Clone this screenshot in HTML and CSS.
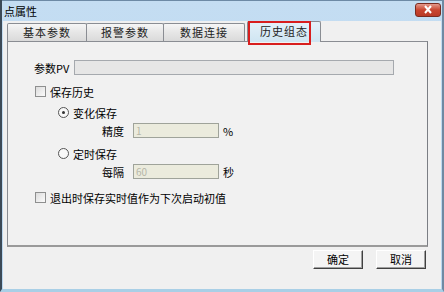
FILE: index.html
```html
<!DOCTYPE html>
<html lang="zh-CN">
<head>
  <meta charset="UTF-8">
  <title>点属性</title>
  <link rel="stylesheet" href="styles.css">
</head>
<body>
  <div class="window">
    <div class="titlebar">
      <span class="title">点属性</span>
      <span class="close">
        <svg width="14" height="9" viewBox="0 0 14 9">
          <path d="M4 1 L10 8 M10 1 L4 8" stroke="#fff" stroke-width="2" fill="none"/>
        </svg>
      </span>
    </div>
    <div class="client">
      <div class="tabs">
        <div class="tab t1">基本参数</div>
        <div class="tab t2">报警参数</div>
        <div class="tab t3">数据连接</div>
        <div class="tab active">历史组态<span class="mark"></span></div>
      </div>
      <div class="panel">
        <div class="row pv">
          <span class="label">参数PV</span>
          <span class="field wide"></span>
        </div>
        <div class="row check first">
          <span class="box"></span><span>保存历史</span>
        </div>
        <div class="row radio">
          <span class="dot on"></span><span>变化保存</span>
        </div>
        <div class="row sub">
          <span class="label">精度</span>
          <span class="field off">1</span>
          <span class="unit">%</span>
        </div>
        <div class="row radio">
          <span class="dot"></span><span>定时保存</span>
        </div>
        <div class="row sub">
          <span class="label">每隔</span>
          <span class="field off">60</span>
          <span class="unit">秒</span>
        </div>
        <div class="row check last">
          <span class="box"></span><span>退出时保存实时值作为下次启动初值</span>
        </div>
      </div>
      <div class="buttons">
        <button class="btn">确定</button>
        <button class="btn">取消</button>
      </div>
    </div>
  </div>
</body>
</html>
```

FILE: styles.css
```css
* {
  box-sizing: border-box;
}
body {
  margin: 0;
  width: 444px;
  height: 292px;
  overflow: hidden;
  font-family: "Noto Sans CJK SC", sans-serif;
  font-size: 11px;
  color: #000;
  background-color: #9fc3e0;
}
.window {
  width: 444px;
  height: 292px;
  border-left: 2px solid #3c4a57;
  border-right: 2px solid #6f8aa3;
  border-bottom: 3px solid #a9cfe6;
  background: linear-gradient(#c4ddf2, #b9d6ef);
}
.titlebar {
  height: 21px;
  display: flex;
  align-items: center;
  justify-content: space-between;
  padding: 0 1px 0 2px;
  border-top: 1px solid #6d8aa5;
}
.title {
  font-size: 11px;
  line-height: 14px;
}
.close {
  width: 26px;
  height: 14px;
  margin-top: -3px;
  border: 1px solid #7a2b20;
  border-radius: 3px;
  background: linear-gradient(#e49a8c, #c9452f 50%, #b93a26);
  display: flex;
  align-items: center;
  justify-content: center;
}
.client {
  height: 268px;
  margin-left: 1px;
  margin-right: 1px;
  background-color: #f0f0f0;
  padding: 1px 0 0 4px;
}
.tabs {
  display: flex;
  align-items: flex-end;
  height: 19px;
}
.tab {
  height: 18px;
  line-height: 16px;
  text-align: center;
  letter-spacing: 1px;
  color: #222;
  border: 1px solid #8a8d93;
  border-bottom: none;
  border-radius: 2px 2px 0 0;
  background: linear-gradient(#f6f6f6, #e6e6e6 50%, #dadada);
  margin-right: -1px;
}
.t1 {
  width: 80px;
}
.t2 {
  width: 78px;
}
.t3 {
  width: 82px;
}
.tab.active {
  position: relative;
  width: 74px;
  height: 21px;
  margin-left: 3px;
  margin-bottom: -1px;
  line-height: 19px;
  background: linear-gradient(#e4f1f9, #cfe5f2);
  z-index: 1;
}
.mark {
  position: absolute;
  left: 0;
  top: -1px;
  width: 63px;
  height: 24px;
  border: 2px solid #d81e1e;
}
.panel {
  width: 421px;
  height: 206px;
  border: 1px solid #8a8d93;
  border-right-color: #7b7e84;
  border-bottom: 2px solid #9a9a9a;
  background-color: #f1f1f1;
  padding: 18px 0 0 26px;
}
.row {
  display: flex;
  align-items: center;
}
.pv {
  height: 15px;
}
.pv .label {
  width: 40px;
}
.field {
  height: 15px;
  border: 1px solid #a5a9ae;
  background-color: #e6e6e6;
  font-size: 10px;
  line-height: 13px;
  padding-left: 2px;
  color: #b6b6a8;
}
.field.wide {
  width: 320px;
}
.field.off {
  width: 86px;
  background-color: #ebebdd;
  border-color: #9fa39a;
}
.check {
  height: 11px;
  margin-left: 1px;
}
.check.first {
  margin-top: 11px;
}
.check.last {
  margin-top: 13px;
}
.box {
  width: 11px;
  height: 11px;
  border: 1px solid #8e8f8f;
  background: linear-gradient(135deg, #dcdcdc, #fbfbfb);
  margin-right: 4px;
}
.radio {
  height: 11px;
  margin-left: 24px;
  margin-top: 10px;
}
.dot {
  width: 11px;
  height: 11px;
  border: 1px solid #555;
  border-radius: 50%;
  background-color: #f8f8f8;
  margin-right: 4px;
  display: flex;
  align-items: center;
  justify-content: center;
}
.dot.on::after {
  content: "";
  width: 3px;
  height: 3px;
  border-radius: 50%;
  background-color: #333;
}
.sub {
  height: 15px;
  margin-left: 68px;
  margin-top: 5px;
}
.sub .label {
  width: 31px;
}
.unit {
  margin-left: 4px;
}
.buttons {
  display: flex;
  justify-content: flex-end;
  gap: 13px;
  padding-right: 15px;
  margin-top: 3px;
}
.btn {
  width: 50px;
  height: 19px;
  padding: 0;
  font-family: "Noto Sans CJK SC", sans-serif;
  font-size: 11px;
  line-height: 15px;
  color: #000;
  background-color: #f4f4f4;
  border: 1px solid #fff;
  border-right-color: #404040;
  border-bottom-color: #404040;
  box-shadow: inset -1px -1px 0 #a0a0a0;
}
```
